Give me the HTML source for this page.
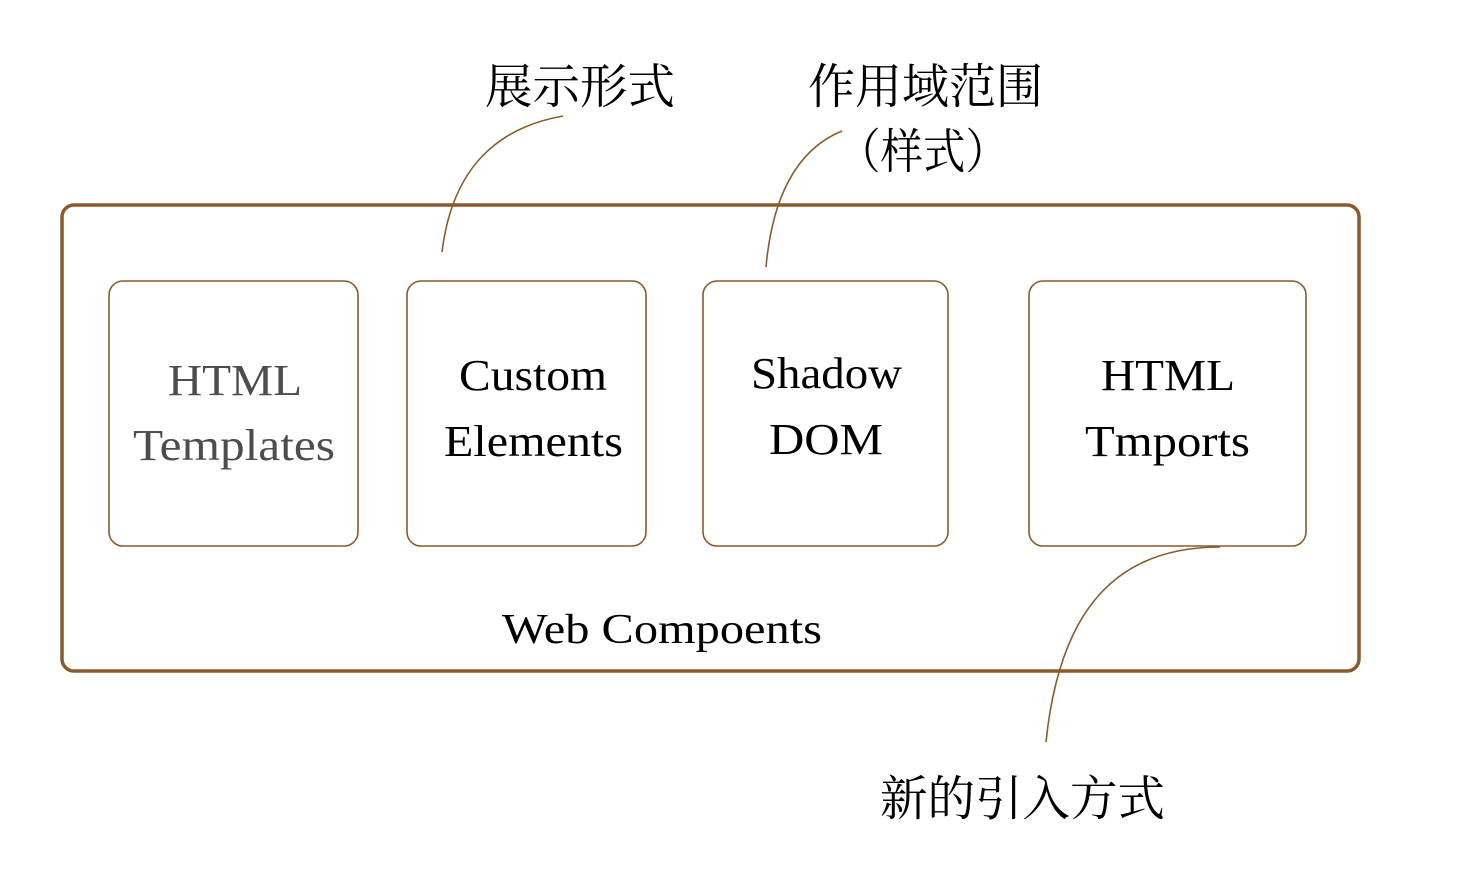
<!DOCTYPE html>
<html><head><meta charset="utf-8"><style>
html,body{margin:0;padding:0;background:#fff;width:1458px;height:890px;overflow:hidden}
svg text{font-family:"Liberation Serif","Noto Serif CJK SC",serif}
.c{font-family:"Liberation Serif","Noto Serif CJK SC",serif}
</style></head><body>
<svg width="1458" height="890" viewBox="0 0 1458 890" xmlns="http://www.w3.org/2000/svg">
<g fill="none" stroke="#8B5A2B">
<rect x="62" y="205" width="1297" height="466" rx="12" stroke-width="3.5"/>
<rect x="109" y="281" width="249" height="265" rx="14" stroke-width="1.6"/>
<rect x="407" y="281" width="239" height="265" rx="14" stroke-width="1.6"/>
<rect x="703" y="281" width="245" height="265" rx="14" stroke-width="1.6"/>
<rect x="1029" y="281" width="277" height="265" rx="14" stroke-width="1.6"/>
<path d="M563,116 C495,128 452,170 442,252" stroke-width="1.6"/>
<path d="M842,131 C795,150 772,200 766,267" stroke-width="1.6"/>
<path d="M1220,547 C1120,547 1060,605 1046,742" stroke-width="1.6"/>
</g>
<g font-size="44" text-anchor="start" lengthAdjust="spacingAndGlyphs">
<text x="168" y="395" fill="#4d4d4d" textLength="134" lengthAdjust="spacingAndGlyphs">HTML</text>
<text x="133" y="460" fill="#4d4d4d" textLength="202" lengthAdjust="spacingAndGlyphs">Templates</text>
<text x="459" y="390" fill="#000" textLength="148" lengthAdjust="spacingAndGlyphs">Custom</text>
<text x="444" y="456" fill="#000" textLength="179" lengthAdjust="spacingAndGlyphs">Elements</text>
<text x="751" y="388" fill="#000" textLength="151" lengthAdjust="spacingAndGlyphs">Shadow</text>
<text x="769" y="454" fill="#000" textLength="114" lengthAdjust="spacingAndGlyphs">DOM</text>
<text x="1101" y="390" fill="#000" textLength="134" lengthAdjust="spacingAndGlyphs">HTML</text>
<text x="1085" y="456" fill="#000" textLength="165" lengthAdjust="spacingAndGlyphs">Tmports</text>
<text x="502" y="643" fill="#000" font-size="42" textLength="320" lengthAdjust="spacingAndGlyphs">Web Compoents</text>
</g>
<g font-size="48" fill="#000">
<text x="485" y="103" textLength="190" lengthAdjust="spacingAndGlyphs">展示形式</text>
<text x="808" y="103" textLength="235" lengthAdjust="spacingAndGlyphs">作用域范围</text>
<text x="838" y="168" textLength="170" lengthAdjust="spacingAndGlyphs">（样式）</text>
<text x="880" y="815" textLength="285" lengthAdjust="spacingAndGlyphs">新的引入方式</text>
</g>
</svg>
</body></html>
